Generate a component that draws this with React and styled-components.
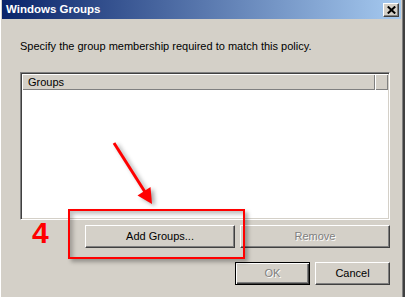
import styled, { createGlobalStyle } from "styled-components";

const GlobalStyle = createGlobalStyle`
  html, body {
    margin: 0;
    padding: 0;
    background: #d4d0c8;
  }
  body {
    font-family: "Liberation Sans", Arial, sans-serif;
  }
`;

const Window = styled.div`
  position: relative;
  box-sizing: border-box;
  width: 405px;
  height: 297px;
  display: flex;
  flex-direction: column;
  background: #d4d0c8;
  border-left: 1px solid #ffffff;
  border-right: 2px solid #404040;
  box-shadow: inset -1px 0 0 #808080;
  overflow: hidden;
`;

const TitleBar = styled.div`
  display: flex;
  align-items: center;
  justify-content: space-between;
  height: 19px;
  margin: 0 2px 0 1px;
  padding: 0 2px 0 4px;
  background: linear-gradient(to right, #0a246a, #a6caf0);
`;

const Title = styled.span`
  color: #fff;
  font-size: 11.5px;
  font-weight: bold;
  line-height: 13px;
`;

const CloseButton = styled.button`
  box-sizing: border-box;
  width: 16px;
  height: 14px;
  padding: 0;
  display: flex;
  align-items: center;
  justify-content: center;
  background: #d4d0c8;
  border: 1px solid;
  border-color: #fff #404040 #404040 #fff;
  box-shadow: inset -1px -1px 0 #808080;
`;

const Body = styled.div`
  flex: 1;
  display: flex;
  flex-direction: column;
  padding: 21px 13px 0 19px;
`;

const Description = styled.p`
  margin: 0;
  font-size: 11px;
  line-height: 13px;
  color: #000;
`;

const ListBox = styled.div`
  box-sizing: border-box;
  margin-top: 19px;
  height: 148px;
  background: #fff;
  border: 1px solid;
  border-color: #808080 #fff #fff #808080;
  box-shadow: inset 1px 1px 0 #404040, inset -1px -1px 0 #d4d0c8;
  padding: 1px;
`;

const ListHeader = styled.div`
  display: flex;
  height: 16px;
`;

const HeaderCell = styled.div`
  box-sizing: border-box;
  flex: ${p => (p.$fill ? "1" : "0 0 353px")};
  padding: 2px 0 0 6px;
  font-size: 11px;
  line-height: 13px;
  color: #000;
  background: #d4d0c8;
  box-shadow: inset 1px 1px 0 #fff, inset -1px -1px 0 #808080;
`;

const ButtonRow = styled.div`
  display: flex;
  justify-content: flex-end;
  gap: 5px;
  margin-top: ${p => p.$top}px;
`;

const Button = styled.button`
  box-sizing: border-box;
  width: ${p => (p.$wide ? "150px" : "75px")};
  height: 23px;
  padding: 0;
  font-family: "Liberation Sans", Arial, sans-serif;
  font-size: 11px;
  line-height: 13px;
  color: ${p => (p.disabled ? "#808080" : "#000")};
  text-shadow: ${p => (p.disabled ? "1px 1px 0 #fff" : "none")};
  background: #d4d0c8;
  border: 1px solid;
  border-color: ${p => (p.$default ? "#000" : "#fff #404040 #404040 #fff")};
  box-shadow: ${p =>
    p.$default
      ? "inset 1px 1px 0 #fff, inset -1px -1px 0 #404040, inset -2px -2px 0 #808080"
      : "inset -1px -1px 0 #808080"};
`;

const Overlay = styled.div`
  position: absolute;
  top: 0;
  left: -1px;
  width: 405px;
  height: 297px;
  pointer-events: none;
`;

const RedBox = styled.div`
  position: absolute;
  left: 68px;
  top: 209px;
  width: 177px;
  height: 50px;
  box-sizing: border-box;
  border: 2px solid #ff0000;
  box-shadow: 3px 3px 4px rgba(0, 0, 0, 0.3), inset 3px 3px 4px rgba(0, 0, 0, 0.25);
`;

const StepNumber = styled.span`
  position: absolute;
  left: 32px;
  top: 218px;
  font-size: 30px;
  line-height: 30px;
  font-weight: bold;
  color: #ff0000;
`;

const Arrow = styled.svg`
  position: absolute;
  left: 0;
  top: 0;
  filter: drop-shadow(3px 2px 2px rgba(0, 0, 0, 0.35));
`;

export default function App() {
  return (
    <>
      <GlobalStyle />
      <Window>
        <TitleBar>
          <Title>Windows Groups</Title>
          <CloseButton aria-label="Close">
            <svg width="9" height="8" viewBox="0 0 9 8">
              <path d="M0.8 0.5 L8.2 7.5 M8.2 0.5 L0.8 7.5" stroke="#000" strokeWidth="2" />
            </svg>
          </CloseButton>
        </TitleBar>
        <Body>
          <Description>Specify the group membership required to match this policy.</Description>
          <ListBox>
            <ListHeader>
              <HeaderCell>Groups</HeaderCell>
              <HeaderCell $fill />
            </ListHeader>
          </ListBox>
          <ButtonRow $top={5}>
            <Button $wide>Add Groups...</Button>
            <Button $wide disabled>Remove</Button>
          </ButtonRow>
          <ButtonRow $top={14}>
            <Button $default disabled>OK</Button>
            <Button>Cancel</Button>
          </ButtonRow>
        </Body>
        <Overlay>
          <Arrow width="405" height="297" viewBox="0 0 405 297">
            <line x1="114" y1="143" x2="145" y2="192" stroke="#ff0000" strokeWidth="3" />
            <polygon points="152,204 137.5,195.5 150.5,187" fill="#ff0000" />
          </Arrow>
          <RedBox />
          <StepNumber>4</StepNumber>
        </Overlay>
      </Window>
    </>
  );
}
